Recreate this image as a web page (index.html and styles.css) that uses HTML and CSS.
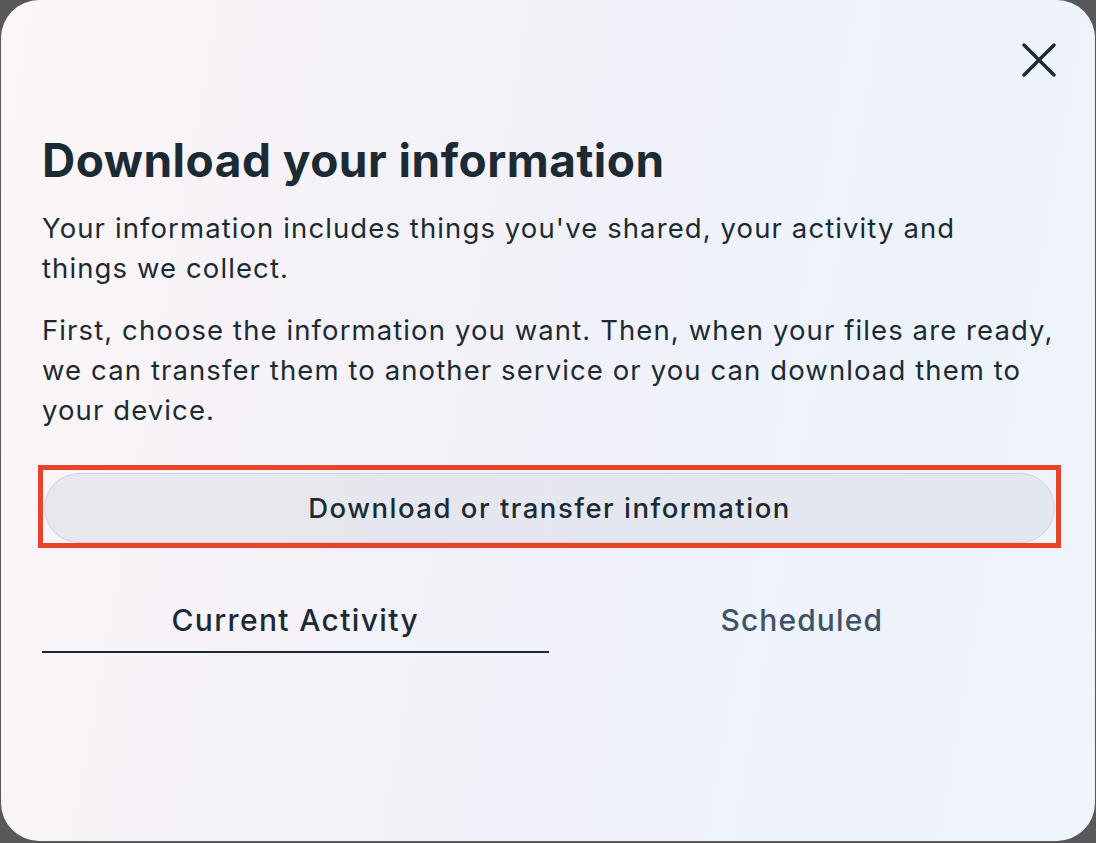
FILE: index.html
```html
<!DOCTYPE html>
<html lang="en">
<head>
<meta charset="utf-8">
<title>Download your information</title>
<link rel="stylesheet" href="styles.css">
</head>
<body>
<div class="dialog">
  <div class="top">
    <button class="close" aria-label="Close">
      <svg width="34" height="34" viewBox="0 0 34 34"><path d="M2 2 L32 32 M32 2 L2 32" stroke="#1c2b33" stroke-width="3.4" stroke-linecap="round" fill="none"/></svg>
    </button>
  </div>
  <div class="content">
    <h1 class="title">Download your information</h1>
    <p class="text">Your information includes things you've shared, your activity and<br>things we collect.</p>
    <p class="text">First, choose the information you want. Then, when your files are ready, we can transfer them to another service or you can download them to your device.</p>
    <div class="highlight">
      <button class="action">Download or transfer information</button>
    </div>
    <div class="tabs">
      <div class="tab active">Current Activity</div>
      <div class="tab">Scheduled</div>
    </div>
  </div>
</div>
</body>
</html>
```
FILE: styles.css
```css
html, body {
  margin: 0;
  padding: 0;
  background: #58585a;
  height: 100%;
  overflow: hidden;
}
.dialog {
  margin-left: 1px;
  width: 1094px;
  height: 841px;
  border-radius: 38px;
  background: linear-gradient(100deg, #fcf7f6 0%, #f6f2f8 25%, #f1f1f9 50%, #eef3fb 75%, #eef4fa 100%);
  font-family: Inter, "Noto Sans", sans-serif;
  color: #1c2b33;
  box-sizing: border-box;
}
.top {
  display: flex;
  justify-content: flex-end;
  padding: 43px 39px 0 0;
  height: 34px;
}
.close {
  border: 0;
  background: none;
  padding: 0;
  width: 34px;
  height: 34px;
  cursor: pointer;
}
.content {
  padding: 0 40px 0 41px;
}
.title {
  margin: 57px 0 0;
  font-size: 46px;
  font-weight: 700;
  line-height: 52px;
  letter-spacing: 0.5px;
}
.text {
  margin: 22px 0 0;
  font-size: 27.5px;
  line-height: 40px;
  font-weight: 400;
  letter-spacing: 1.1px;
}
.highlight {
  margin: 35px -6px 0 -4px;
  border: 5px solid #e8432b;
  padding: 3px 1px 0 1px;
}
.action {
  display: block;
  width: 100%;
  height: 70px;
  border-radius: 36px;
  border: 1px solid #cfd3da;
  background: linear-gradient(90deg, #e8e7ee, #e3e7ef);
  font-family: inherit;
  font-size: 27.5px;
  font-weight: 500;
  letter-spacing: 1.5px;
  color: #1c2b33;
}
.tabs {
  display: flex;
  margin-top: 52px;
}
.tab {
  flex: 1;
  text-align: center;
  font-size: 30px;
  font-weight: 500;
  line-height: 40px;
  letter-spacing: 1.1px;
  padding-bottom: 11px;
  color: #3f5268;
  border-bottom: 2px solid transparent;
}
.tab.active {
  color: #1c2b33;
  letter-spacing: 1.35px;
  border-bottom-color: #1c2b33;
}
```
